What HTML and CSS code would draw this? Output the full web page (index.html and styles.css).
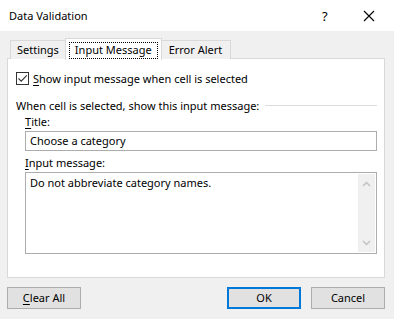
FILE: index.html
```html
<!doctype html>
<html lang="en">
<head>
    <meta charset="UTF-8">
    <title>Data Validation</title>
    <link rel="stylesheet" href="styles.css">
</head>
<body>
    <div class="dialog">
        <div class="titleBar">
            <span class="title">Data Validation</span>
            <span class="help">?</span>
            <svg class="close" width="12" height="12" viewBox="0 0 12 12">
                <path d="M1 1L11 11M11 1L1 11" stroke="#000" stroke-width="1.1" fill="none"/>
            </svg>
        </div>
        <div class="body">
            <!--tabs-->
            <div class="tabs">
                <div class="tab">Settings</div>
                <div class="tab on"><span class="focus">Input Message</span></div>
                <div class="tab">Error Alert</div>
            </div>
            <div class="panel">
                <label class="check">
                    <span class="box">
                        <svg width="11" height="11" viewBox="0 0 11 11">
                            <path d="M1.5 5.5L4.2 8.2L9.8 2.3" stroke="#333" stroke-width="1.1" fill="none"/>
                        </svg>
                    </span>
                    <span><u>S</u>how input message when cell is selected</span>
                </label>
                <div class="group">
                    <span>When cell is selected, show this input message:</span>
                    <span class="line"></span>
                </div>
                <div class="field">
                    <div class="label"><u>T</u>itle:</div>
                    <div class="input">Choose a category</div>
                    <div class="label"><u>I</u>nput message:</div>
                    <div class="area">
                        <div class="text">Do not abbreviate category names.</div>
                        <div class="scroll">
                            <svg width="9" height="6" viewBox="0 0 9 6"><path d="M1 5L4.5 1.5L8 5" stroke="#c2c2c2" stroke-width="1.5" fill="none"/></svg>
                            <svg width="9" height="6" viewBox="0 0 9 6"><path d="M1 1L4.5 4.5L8 1" stroke="#c2c2c2" stroke-width="1.5" fill="none"/></svg>
                        </div>
                    </div>
                </div>
            </div>
            <div class="buttons">
                <a class="btn" href="javascript:void(0)"><u>C</u>lear All</a>
                <span class="spacer"></span>
                <a class="btn def" href="javascript:void(0)">OK</a>
                <a class="btn" href="javascript:void(0)">Cancel</a>
            </div>
        </div>
    </div>
</body>
</html>
```

FILE: styles.css
```css
*{
    padding: 0;
    margin: 0;
    box-sizing: border-box;
}
a{
    text-decoration: none;
    color: #000;
}
html,body{
    width: 394px;
    height: 319px;
    overflow: hidden;
}
body{
    font-family: "Segoe UI", "Noto Sans", sans-serif;
    font-size: 11px;
    color: #000;
    background: #f0f0f0;
}
u{
    text-underline-offset: 2px;
}

.dialog{
    width: 394px;
    height: 319px;
}
.titleBar{
    height: 31px;
    background: #fff;
    display: flex;
    align-items: center;
    padding-left: 9px;
}
.titleBar .title{
    flex: 1;
    font-size: 11px;
}
.titleBar .help{
    width: 12px;
    margin-right: 29px;
    font-size: 13px;
}
.titleBar .close{
    margin-right: 19px;
}

.body{
    padding: 7px 9px 0 7px;
}
.tabs{
    display: flex;
    padding-left: 3px;
    height: 21px;
    align-items: flex-end;
    position: relative;
    z-index: 1;
    margin-bottom: -1px;
}
.tab{
    height: 19px;
    line-height: 17px;
    padding: 0 6px;
    border: 1px solid #d9d9d9;
    border-bottom: none;
    background: #f0f0f0;
}
.tab:first-child{
    border-right: none;
}
.tab.on{
    height: 22px;
    margin-bottom: -1px;
    background: #fff;
    padding: 3px 3px 0;
    line-height: 14px;
}
.tab.on .focus{
    display: block;
    border: 1px dotted #000;
    padding: 0 5px 1px;
}
.tab:last-child{
    border-left: none;
    padding: 0 8px 0 7px;
}

.panel{
    height: 220px;
    background: #fff;
    border: 1px solid #d9d9d9;
    padding: 12px 7px 0 8px;
}
.check{
    display: flex;
    align-items: center;
    gap: 4px;
    height: 14px;
}
.check .box{
    width: 13px;
    height: 13px;
    border: 1px solid #333;
    display: flex;
    align-items: center;
    justify-content: center;
}
.group{
    display: flex;
    align-items: center;
    margin-top: 12px;
    height: 16px;
    gap: 6px;
}
.group .line{
    flex: 1;
    height: 1px;
    background: #dcdcdc;
}
.field{
    padding-left: 9px;
}
.field .label{
    margin-top: 4px;
    height: 16px;
    line-height: 16px;
}
.field .label:first-child{
    margin-top: 1px;
}
.input{
    margin-top: 1px;
    height: 20px;
    border: 1px solid #adadad;
    line-height: 18px;
    padding-left: 4px;
}
.area{
    margin-top: 1px;
    height: 82px;
    border: 1px solid #adadad;
    display: flex;
}
.area .text{
    flex: 1;
    padding: 2px 4px;
    line-height: 16px;
}
.area .scroll{
    width: 17px;
    margin: 1px;
    background: #f0f0f0;
    display: flex;
    flex-direction: column;
    align-items: center;
    justify-content: space-between;
    padding: 7px 0 6px;
}

.buttons{
    display: flex;
    margin-top: 9px;
    gap: 10px;
}
.spacer{
    flex: 1;
}
.btn{
    display: block;
    width: 74px;
    height: 22px;
    line-height: 20px;
    text-align: center;
    background: #e1e1e1;
    border: 1px solid #adadad;
}
.btn.def{
    border: 2px solid #0078d7;
    line-height: 18px;
}
```
